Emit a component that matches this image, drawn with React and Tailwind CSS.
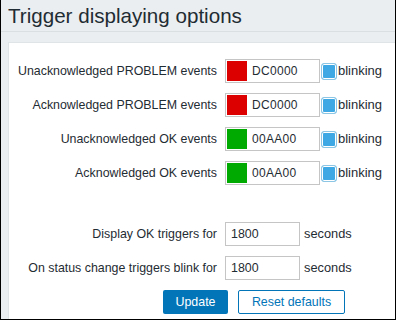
import React from "react";

const font = { fontFamily: '"Liberation Sans", Arial, sans-serif' };

function ColorRow({ label, color, value }) {
  return (
    <div className="flex items-center h-[34px]">
      <div className="w-[208px] text-right text-[12.4px] text-[#1f2c33] whitespace-nowrap">{label}</div>
      <div className="ml-[8px] flex items-center w-[95px] h-[24px] border border-[#c5c5c5] bg-white">
        <div className="w-[20px] h-[20px] ml-[1px]" style={{ background: color }} />
        <span className="ml-[5px] text-[12px] text-[#1f2c33] tracking-[0.3px]">{value}</span>
      </div>
      <div className="ml-[1px] w-[16px] h-[17px] rounded-[3px] border border-[#8cc6e4] bg-[#3ea8e4] shadow-[inset_0_0_0_1px_#ffffff]" />
      <span className="ml-[1px] text-[13px] text-[#1f2c33]">blinking</span>
    </div>
  );
}

function TimeRow({ label, value }) {
  return (
    <div className="flex items-center h-[34px]">
      <div className="w-[208px] text-right text-[12.4px] text-[#1f2c33] whitespace-nowrap">{label}</div>
      <div className="ml-[8px] w-[75px] h-[24px] border border-[#c5c5c5] bg-white flex items-center pl-[5px] text-[12.4px] text-[#1f2c33]">
        {value}
      </div>
      <span className="ml-[4px] text-[12.8px] text-[#1f2c33]">seconds</span>
    </div>
  );
}

export default function App() {
  return (
    <div style={font} className="w-[396px] h-[320px] border-l border-r border-b border-black bg-[#ebeef0] overflow-hidden flex flex-col">
      <div className="h-[32px] pl-[7px] pt-[2px] text-[20.6px] leading-[28px] text-[#1f2c33] border-b border-[#dadfe2]">
        Trigger displaying options
      </div>
      <div className="mt-[10px] ml-[7px] flex-1 bg-white border-t border-l border-[#dfe4e7] flex flex-col">
        <div className="pt-[11px]">
          <ColorRow label="Unacknowledged PROBLEM events" color="#DC0000" value="DC0000" />
          <ColorRow label="Acknowledged PROBLEM events" color="#DC0000" value="DC0000" />
          <ColorRow label="Unacknowledged OK events" color="#00AA00" value="00AA00" />
          <ColorRow label="Acknowledged OK events" color="#00AA00" value="00AA00" />
        </div>
        <div className="mt-[27px]">
          <TimeRow label="Display OK triggers for" value="1800" />
          <TimeRow label="On status change triggers blink for" value="1800" />
        </div>
        <div className="flex mt-[5px] ml-[154px] gap-[10px]">
          <button className="w-[65px] h-[24px] bg-[#0275b8] text-white text-[12.4px] rounded-[2px]">Update</button>
          <button className="w-[107px] h-[24px] bg-white border border-[#0275b8] text-[#0275b8] text-[12.4px] rounded-[2px]">Reset defaults</button>
        </div>
      </div>
    </div>
  );
}
